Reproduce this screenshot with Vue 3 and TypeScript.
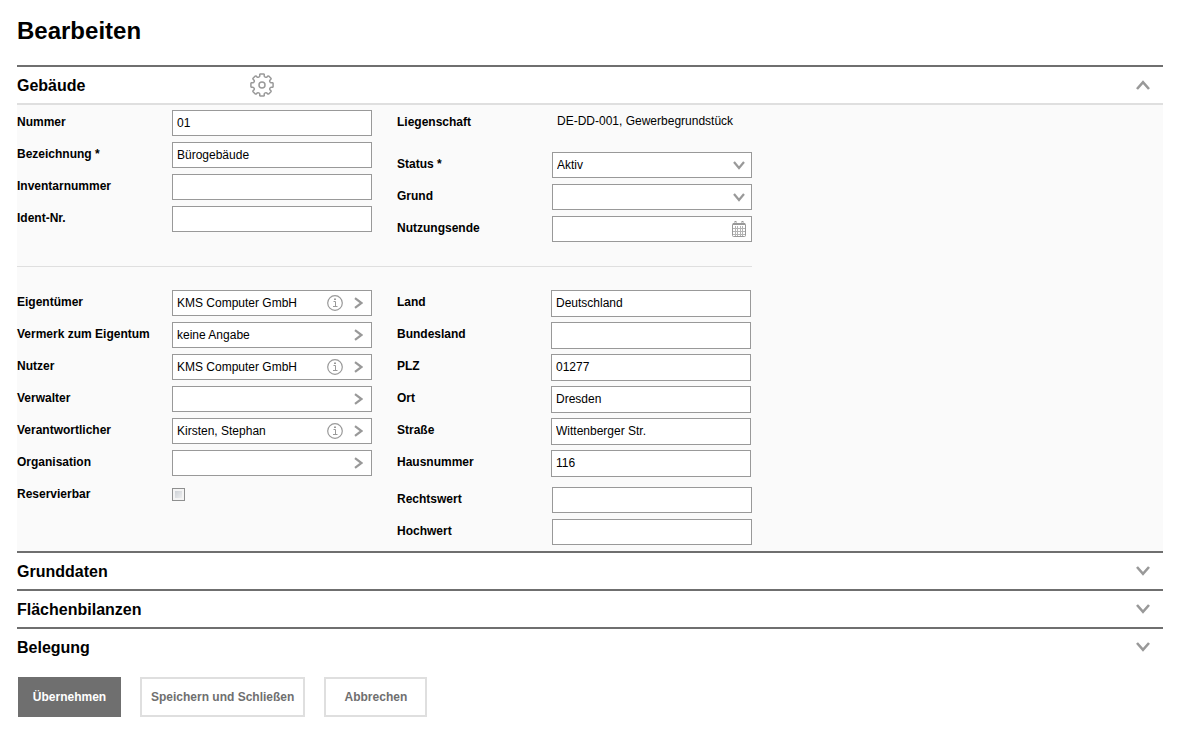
<script setup lang="ts">
import { reactive, ref } from 'vue'

interface Field {
  id: string
  label: string
  value: string
  info?: boolean
}

const master = reactive<Field[]>([
  { id: 'nummer', label: 'Nummer', value: '01' },
  { id: 'bezeichnung', label: 'Bezeichnung *', value: 'Bürogebäude' },
  { id: 'inventar', label: 'Inventarnummer', value: '' },
  { id: 'ident', label: 'Ident-Nr.', value: '' },
])

const lookups = reactive<Field[]>([
  { id: 'eigentuemer', label: 'Eigentümer', value: 'KMS Computer GmbH', info: true },
  { id: 'vermerk', label: 'Vermerk zum Eigentum', value: 'keine Angabe' },
  { id: 'nutzer', label: 'Nutzer', value: 'KMS Computer GmbH', info: true },
  { id: 'verwalter', label: 'Verwalter', value: '' },
  { id: 'verantwortlicher', label: 'Verantwortlicher', value: 'Kirsten, Stephan', info: true },
  { id: 'organisation', label: 'Organisation', value: '' },
])

const address = reactive<Field[]>([
  { id: 'land', label: 'Land', value: 'Deutschland' },
  { id: 'bundesland', label: 'Bundesland', value: '' },
  { id: 'plz', label: 'PLZ', value: '01277' },
  { id: 'ort', label: 'Ort', value: 'Dresden' },
  { id: 'strasse', label: 'Straße', value: 'Wittenberger Str.' },
  { id: 'hausnummer', label: 'Hausnummer', value: '116' },
])

const coordinates = reactive<Field[]>([
  { id: 'rechtswert', label: 'Rechtswert', value: '' },
  { id: 'hochwert', label: 'Hochwert', value: '' },
])

const sections = reactive([
  { title: 'Grunddaten', open: false },
  { title: 'Flächenbilanzen', open: false },
  { title: 'Belegung', open: false },
])

const buildingOpen = ref(true)
const status = ref('Aktiv')
const reason = ref('')
const endOfUse = ref('')
const reservable = ref(false)

// Outline of the gear: eight rounded teeth around a 24 x 24 box.
function gearOutline(): string {
  const at = (deg: number, r: number) => {
    const a = (deg * Math.PI) / 180
    return `${(12 + r * Math.cos(a)).toFixed(2)} ${(12 + r * Math.sin(a)).toFixed(2)}`
  }
  let d = `M${at(-8, 11.2)}`
  for (let a = 0; a < 360; a += 45) {
    d += `L${at(a + 8, 11.2)}`
    d += `Q${at(a + 13, 11.2)} ${at(a + 13, 9.8)}`
    d += `C${at(a + 14, 8.2)} ${at(a + 31, 8.2)} ${at(a + 32, 9.8)}`
    d += `Q${at(a + 32, 11.2)} ${at(a + 37, 11.2)}`
  }
  return d + 'Z'
}
const gear = gearOutline()
</script>

<template>
  <main class="page">
    <h1>Bearbeiten</h1>

    <form @submit.prevent>
      <section class="section">
        <header class="bar" :class="{ open: buildingOpen }">
          <h2 class="wide">Gebäude</h2>
          <button type="button" class="icon-btn" aria-label="Einstellungen">
            <svg width="24" height="24" viewBox="0 0 24 24">
              <path :d="gear" class="thin" />
              <circle cx="12" cy="12" r="3" class="thin" />
            </svg>
          </button>
          <button type="button" class="toggle" aria-label="Gebäude" :aria-expanded="buildingOpen" @click="buildingOpen = !buildingOpen">
            <svg width="14" height="10" viewBox="0 0 14 10">
              <path :d="buildingOpen ? 'M1 9L7 2.2L13 9' : 'M1 1L7 7.8L13 1'" class="thick" />
            </svg>
          </button>
        </header>

        <div v-if="buildingOpen" class="panel">
          <div class="group ruled">
            <div class="column">
              <div v-for="f in master" :key="f.id" class="row">
                <label :for="f.id">{{ f.label }}</label>
                <input :id="f.id" v-model="f.value" type="text" class="box" />
              </div>
            </div>
            <div class="column">
              <div class="row tall">
                <span class="caption">Liegenschaft</span>
                <span class="static">DE-DD-001, Gewerbegrundstück</span>
              </div>
              <div class="row">
                <label for="status">Status *</label>
                <div class="pick">
                  <select id="status" v-model="status" class="box">
                    <option>Aktiv</option>
                    <option>Inaktiv</option>
                  </select>
                  <svg width="12" height="9" viewBox="0 0 12 9"><path d="M1 1L6 7L11 1" class="mid" /></svg>
                </div>
              </div>
              <div class="row">
                <label for="grund">Grund</label>
                <div class="pick">
                  <select id="grund" v-model="reason" class="box">
                    <option value=""></option>
                  </select>
                  <svg width="12" height="9" viewBox="0 0 12 9"><path d="M1 1L6 7L11 1" class="mid" /></svg>
                </div>
              </div>
              <div class="row">
                <label for="ende">Nutzungsende</label>
                <div class="box combo">
                  <input id="ende" v-model="endOfUse" type="text" />
                  <button type="button" class="icon-btn cal" aria-label="Kalender">
                    <svg width="14" height="16" viewBox="0 0 14 16">
                      <path d="M1 2H13V4H1Z" fill="#999" />
                      <path d="M3.5 0V3M10.5 0V3" stroke="#999" stroke-width="2" />
                      <path d="M3.5 1V3M10.5 1V3" stroke="#ddd" stroke-width="1" />
                      <rect x="0.5" y="2.5" width="13" height="13" rx="1" fill="none" stroke="#999" />
                      <path d="M3.5 5V15M5.5 5V15M8.5 5V15M10.5 5V15M1 7.5H13M1 10.5H13M1 13.5H13" stroke="#b4b4b4" fill="none" />
                    </svg>
                  </button>
                </div>
              </div>
            </div>
          </div>

          <div class="group">
            <div class="column">
              <div v-for="f in lookups" :key="f.id" class="row">
                <label :for="f.id">{{ f.label }}</label>
                <div class="box combo">
                  <input :id="f.id" v-model="f.value" type="text" />
                  <button v-if="f.info" type="button" class="icon-btn" aria-label="Info">
                    <svg width="16" height="16" viewBox="0 0 16 16">
                      <circle cx="8" cy="8" r="7.3" class="hair" />
                      <path d="M6.5 6.5H8.5V11.5M6 11.5H10.5" class="fine" />
                      <rect x="7" y="3.5" width="2" height="1.5" fill="#999" />
                    </svg>
                  </button>
                  <button type="button" class="icon-btn next" aria-label="Auswählen">
                    <svg width="9" height="12" viewBox="0 0 9 12"><path d="M1 1.2L7.5 6L1 10.8" class="mid" /></svg>
                  </button>
                </div>
              </div>
              <div class="row">
                <label for="reservierbar">Reservierbar</label>
                <input id="reservierbar" v-model="reservable" type="checkbox" class="tick" />
              </div>
            </div>
            <div class="column">
              <div class="address">
                <div v-for="f in address" :key="f.id" class="row">
                  <label :for="f.id">{{ f.label }}</label>
                  <input :id="f.id" v-model="f.value" type="text" class="box" />
                </div>
              </div>
              <div v-for="f in coordinates" :key="f.id" class="row">
                <label :for="f.id">{{ f.label }}</label>
                <input :id="f.id" v-model="f.value" type="text" class="box" />
              </div>
            </div>
          </div>
        </div>
      </section>

      <section v-for="s in sections" :key="s.title" class="section">
        <header class="bar">
          <h2>{{ s.title }}</h2>
          <button type="button" class="toggle" :aria-label="s.title" :aria-expanded="s.open" @click="s.open = !s.open">
            <svg width="14" height="10" viewBox="0 0 14 10">
              <path :d="s.open ? 'M1 9L7 2.2L13 9' : 'M1 1L7 7.8L13 1'" class="thick" />
            </svg>
          </button>
        </header>
      </section>

      <footer class="actions">
        <button type="submit" class="action primary">Übernehmen</button>
        <button type="button" class="action">Speichern und Schließen</button>
        <button type="button" class="action">Abbrechen</button>
      </footer>
    </form>
  </main>
</template>

<style>
body {
  margin: 0;
  background: #fff;
}
</style>

<style scoped>
.page {
  padding: 17px 14px 16px 17px;
  color: #000;
  font: 12px "Liberation Sans", Arial, sans-serif;
}
.page * {
  box-sizing: border-box;
}
h1 {
  margin: 0 0 20px;
  font-size: 24px;
  line-height: 28px;
}
h2 {
  margin: 0;
  padding-top: 2px;
  font-size: 16px;
  line-height: 34px;
}
h2.wide {
  width: 233px;
}
button,
input,
select {
  margin: 0;
  font: inherit;
  color: inherit;
}
svg {
  display: block;
}
path.thin,
path.mid,
path.thick,
path.fine,
circle {
  fill: none;
  stroke: #999;
}
.thin {
  stroke-width: 1.5;
  stroke-linejoin: round;
}
.mid {
  stroke-width: 2.2;
}
.thick {
  stroke-width: 2.6;
}
.hair {
  stroke-width: 1.2;
}
.fine {
  stroke-width: 1;
}
.section {
  border-top: 2px solid #6f6f6f;
}
.bar {
  display: flex;
  align-items: center;
}
.bar.open {
  border-bottom: 2px solid #dfdfdf;
}
.toggle {
  display: flex;
  flex: 1;
  justify-content: flex-end;
  align-items: center;
  height: 36px;
  padding: 0 13px 0 0;
  border: 0;
  background: none;
  cursor: pointer;
}
.icon-btn {
  flex: none;
  padding: 0;
  border: 0;
  background: none;
  cursor: pointer;
}
.panel {
  padding: 5px 0 6px;
  background: #fafafa;
}
.group {
  display: flex;
  gap: 25px;
  width: 735px;
  max-width: 100%;
}
.ruled {
  margin-bottom: 23px;
  padding-bottom: 24px;
  border-bottom: 1px solid #dfdfdf;
}
.column {
  display: flex;
  flex: 1;
  flex-direction: column;
  gap: 6px;
  min-width: 0;
}
.row {
  display: grid;
  grid-template-columns: 155px minmax(0, 1fr);
  align-items: start;
  min-height: 26px;
}
.row.tall {
  min-height: 36px;
}
.row label,
.caption {
  font-weight: bold;
  line-height: 24px;
}
.static {
  padding-left: 5px;
  line-height: 22px;
}
.box {
  width: 100%;
  height: 26px;
  padding: 0 4px;
  border: 1px solid #999;
  border-radius: 0;
  background: #fff;
}
.address {
  display: flex;
  flex-direction: column;
  gap: 5px;
  margin: 0 1px 4px 0;
}
.address .row {
  grid-template-columns: 154px minmax(0, 1fr);
}
.address .box {
  height: 27px;
  padding-bottom: 2px;
}
.pick {
  position: relative;
}
.pick select {
  appearance: none;
}
.pick svg {
  position: absolute;
  top: 9px;
  right: 7px;
  pointer-events: none;
}
.combo {
  display: flex;
  align-items: center;
}
.combo input {
  flex: 1;
  min-width: 0;
  height: 24px;
  padding: 0;
  border: 0;
  background: none;
}
.combo .next {
  margin: 0 4px 0 11px;
}
.combo .cal {
  margin-right: 1px;
}
.tick {
  appearance: none;
  width: 13px;
  height: 13px;
  margin-top: 6px;
  border: 1px solid #8e8f8f;
  background: linear-gradient(135deg, #c4c9cf, #f6f6f6);
  box-shadow: inset 0 0 0 2px #f4f4f4;
}
.tick:checked {
  background: #6f6f6f;
}
.actions {
  display: flex;
  flex-wrap: wrap;
  gap: 19px;
  padding: 12px 1px 0;
}
.action {
  min-width: 103px;
  height: 40px;
  padding: 0 9px;
  border: 2px solid #dfdfdf;
  background: #fff;
  color: #6f6f6f;
  font-weight: bold;
  cursor: pointer;
}
.action.primary {
  border-color: #6f6f6f;
  background: #6f6f6f;
  color: #fff;
}
</style>
